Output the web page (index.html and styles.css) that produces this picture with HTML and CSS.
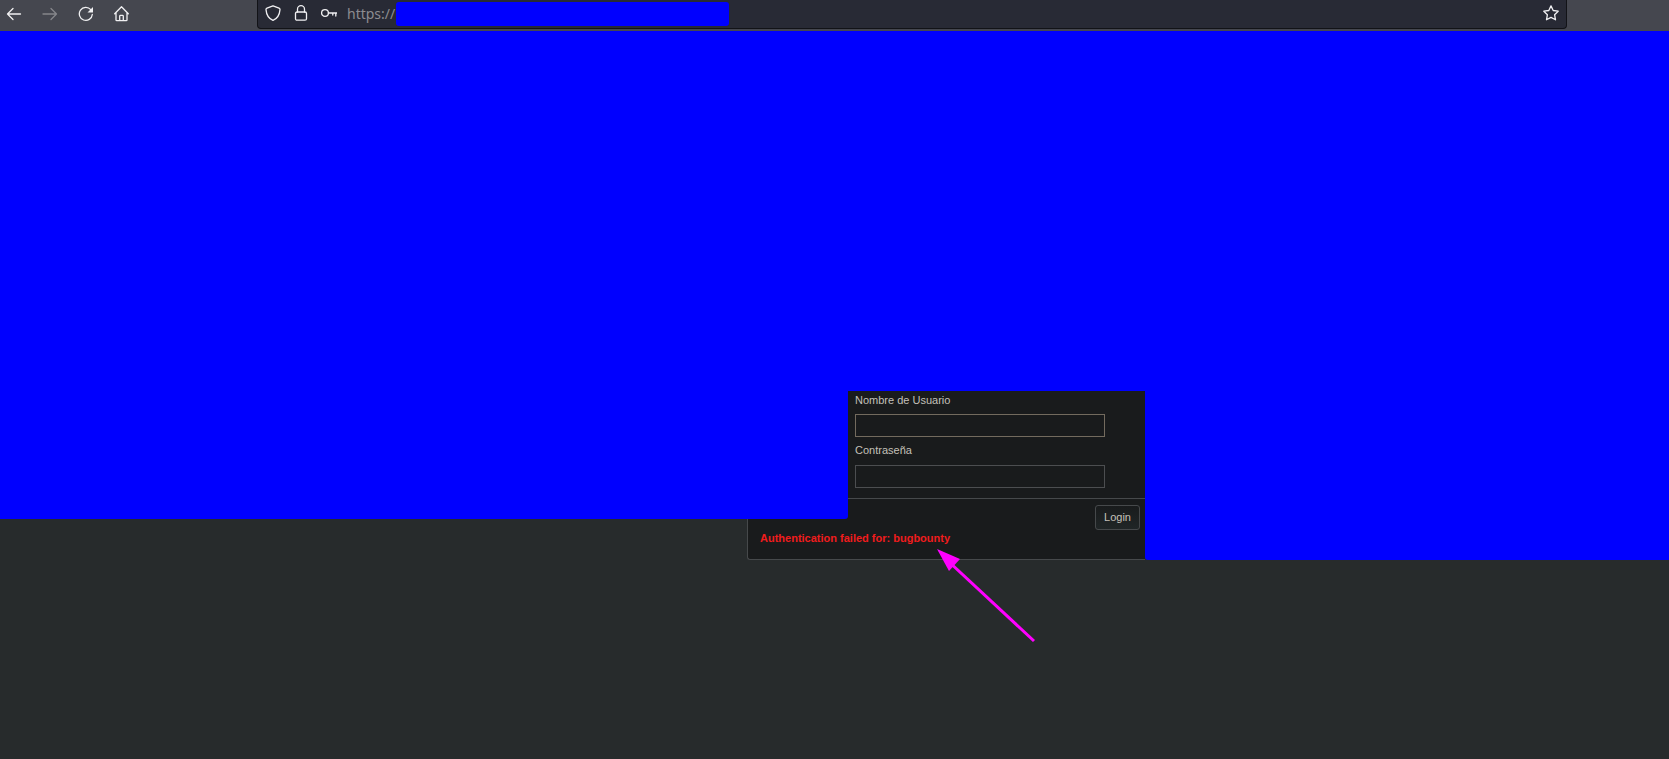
FILE: index.html
```html
<!DOCTYPE html>
<html lang="es">
<head>
<meta charset="utf-8">
<title>Login</title>
<link rel="stylesheet" href="styles.css">
</head>
<body>
<header class="toolbar">
  <nav class="nav">
    <button class="icon-button" type="button" aria-label="Back"><svg class="icon" viewBox="0 0 16 16"><path d="M14.500 8H1.500M7 2.500 1.500 8 7 13.500"/></svg></button>
    <button class="icon-button" type="button" aria-label="Forward" disabled><svg class="icon" viewBox="0 0 16 16"><path d="M1 8h13.500M9 2.500l5.500 5.500L9 13.500"/></svg></button>
    <button class="icon-button" type="button" aria-label="Reload"><svg class="icon" viewBox="0 0 16 16"><path d="M12.800 3.700A6.500 6.500 0 1 0 14.300 8.500"/><path class="solid" d="M15 1V6.500H9.500z"/></svg></button>
    <button class="icon-button" type="button" aria-label="Home"><svg class="icon" viewBox="0 0 16 16"><path d="M.7 7.700 7.500.8l6.800 6.900M2 6.700v7.200q0 .8.800.8h9.400q.8 0 .8-.8V6.700M5.700 14.700v-4.500q0-.8.800-.8h2q.8 0 .8.800v4.500"/></svg></button>
  </nav>
  <div class="address">
    <button class="icon-button" type="button" aria-label="Tracking protection"><svg class="icon" viewBox="0 0 16 16"><path d="M8 .8 14 3.200q1 .4 1 1.400C14.600 9.500 12.500 13.500 8 15.400 3.500 13.500 1.400 9.500 1 4.600q0-1 1-1.400z"/></svg></button>
    <button class="icon-button" type="button" aria-label="Connection"><svg class="icon" viewBox="0 0 16 16"><rect x="2.500" y="7" width="11" height="8.200" rx="1.500"/><path d="M4.500 7V4.200a3.500 3.500 0 0 1 7 0V7"/></svg></button>
    <button class="icon-button" type="button" aria-label="Saved login"><svg class="icon" viewBox="0 0 16 16"><circle cx="4" cy="8" r="3.400"/><path d="M7.400 8H16M14.800 8v3M11.800 8v2"/></svg></button>
    <span class="url">https://</span>
    <span class="url-mask"></span>
    <button class="icon-button bookmark" type="button" aria-label="Bookmark"><svg class="icon" viewBox="0 0 16 16"><path d="M8 .9 10.200 5.500 15.200 6.200 11.600 9.700 12.500 14.800 8 12.400 3.500 14.800 4.400 9.700.8 6.200 5.800 5.500z"/></svg></button>
  </div>
</header>
<main class="stage">
  <form class="card">
    <div class="fields">
      <label class="label" for="user">Nombre de Usuario</label>
      <input class="input active" id="user" type="text">
      <label class="label" for="pass">Contraseña</label>
      <input class="input" id="pass" type="password">
    </div>
    <div class="actions"><button class="login" type="button">Login</button></div>
    <p class="error">Authentication failed for: bugbounty</p>
    <svg class="arrow" viewBox="0 0 104 96" aria-hidden="true"><path class="arrow-line" d="M14 13 101 94"/><path class="arrow-head" d="M4 2 27 12 16 24z"/></svg>
  </form>
  <div class="mask mask-left"></div>
  <div class="mask mask-top"></div>
  <div class="mask mask-right"></div>
</main>
</body>
</html>
```
FILE: styles.css
```css
* { box-sizing: border-box; }
body {
  margin: 0;
  min-height: 100vh;
  background: #272b2c;
  font-family: "Liberation Sans", Arial, sans-serif;
  font-size: 11px;
  line-height: 16px;
}
.toolbar {
  display: grid;
  grid-template-columns: minmax(160px, 257fr) 1310fr 102fr;
  height: 31px;
  background: #45474f;
}
.nav {
  display: flex;
  align-items: center;
  gap: 20px;
  height: 28px;
  padding-left: 6px;
}
.icon-button {
  flex: none;
  width: 16px;
  height: 16px;
  padding: 0;
  border: 0;
  background: none;
  color: #f0f0f2;
}
.icon-button:disabled { color: #85868b; }
.icon {
  display: block;
  width: 16px;
  height: 16px;
  fill: none;
  stroke: currentColor;
  stroke-width: 1.3;
  stroke-linecap: round;
  stroke-linejoin: round;
}
.solid { fill: currentColor; stroke: none; }
.address {
  display: flex;
  align-items: center;
  gap: 12px;
  height: 29px;
  padding: 0 7px 2px 7px;
  border: 1px solid #121317;
  border-top: 0;
  border-radius: 0 0 4px 4px;
  background: #282a35;
}
.url {
  margin-left: -2px;
  padding-top: 2px;
  color: #8c8c90;
  font: 14px/20px "Noto Sans", sans-serif;
}
.url-mask {
  flex: 0 1 333px;
  height: 24px;
  margin: 2px 0 0 -11px;
  border-radius: 3px;
  background: #00f;
}
.bookmark { margin-left: auto; }
.stage {
  display: grid;
  grid-template-columns: 747fr 101px 297px 524fr;
  grid-template-rows: 360px 128px auto;
}
.mask {
  z-index: 1;
  background: #00f;
}
.mask-left { grid-area: 1 / 1 / 3 / 3; border-bottom-right-radius: 3px; }
.mask-top { grid-area: 1 / 3 / 2 / 4; }
.mask-right { grid-area: 1 / 4 / 4 / 5; border-bottom-left-radius: 3px; }
.card {
  grid-area: 2 / 2 / 4 / 4;
  position: relative;
  border: 1px solid #46494b;
  border-width: 0 0 1px 1px;
  border-radius: 0 0 0 3px;
  background: #191b1c;
}
.fields {
  display: flex;
  flex-direction: column;
  align-items: flex-start;
  padding: 1px 40px 10px 107px;
  border-bottom: 1px solid #46494b;
}
.label { color: #c4c0b9; }
.input {
  width: 100%;
  height: 23px;
  margin: 6px 0 5px;
  padding: 0 4px;
  border: 1px solid #4c4e50;
  background: #191b1c;
  color: #c4c0b9;
  font: inherit;
}
.active { border-color: #736b5e; }
.input:last-child { margin: 7px 0 0; }
.actions {
  display: flex;
  justify-content: flex-end;
  padding: 6px 5px 0;
}
.login {
  width: 45px;
  height: 25px;
  padding: 0 0 2px;
  border: 1px solid #46494b;
  border-radius: 3px;
  background: linear-gradient(#191b1c, #202627);
  color: #c4c0b9;
  font: inherit;
}
.error {
  margin: 0;
  padding: 0 12px 13px;
  color: #f01c1c;
  font-weight: bold;
}
.arrow {
  position: absolute;
  left: 185px;
  top: 156px;
  z-index: 2;
  width: 104px;
  height: 96px;
}
.arrow-line { fill: none; stroke: #f0f; stroke-width: 3; }
.arrow-head { fill: #f0f; }
```
